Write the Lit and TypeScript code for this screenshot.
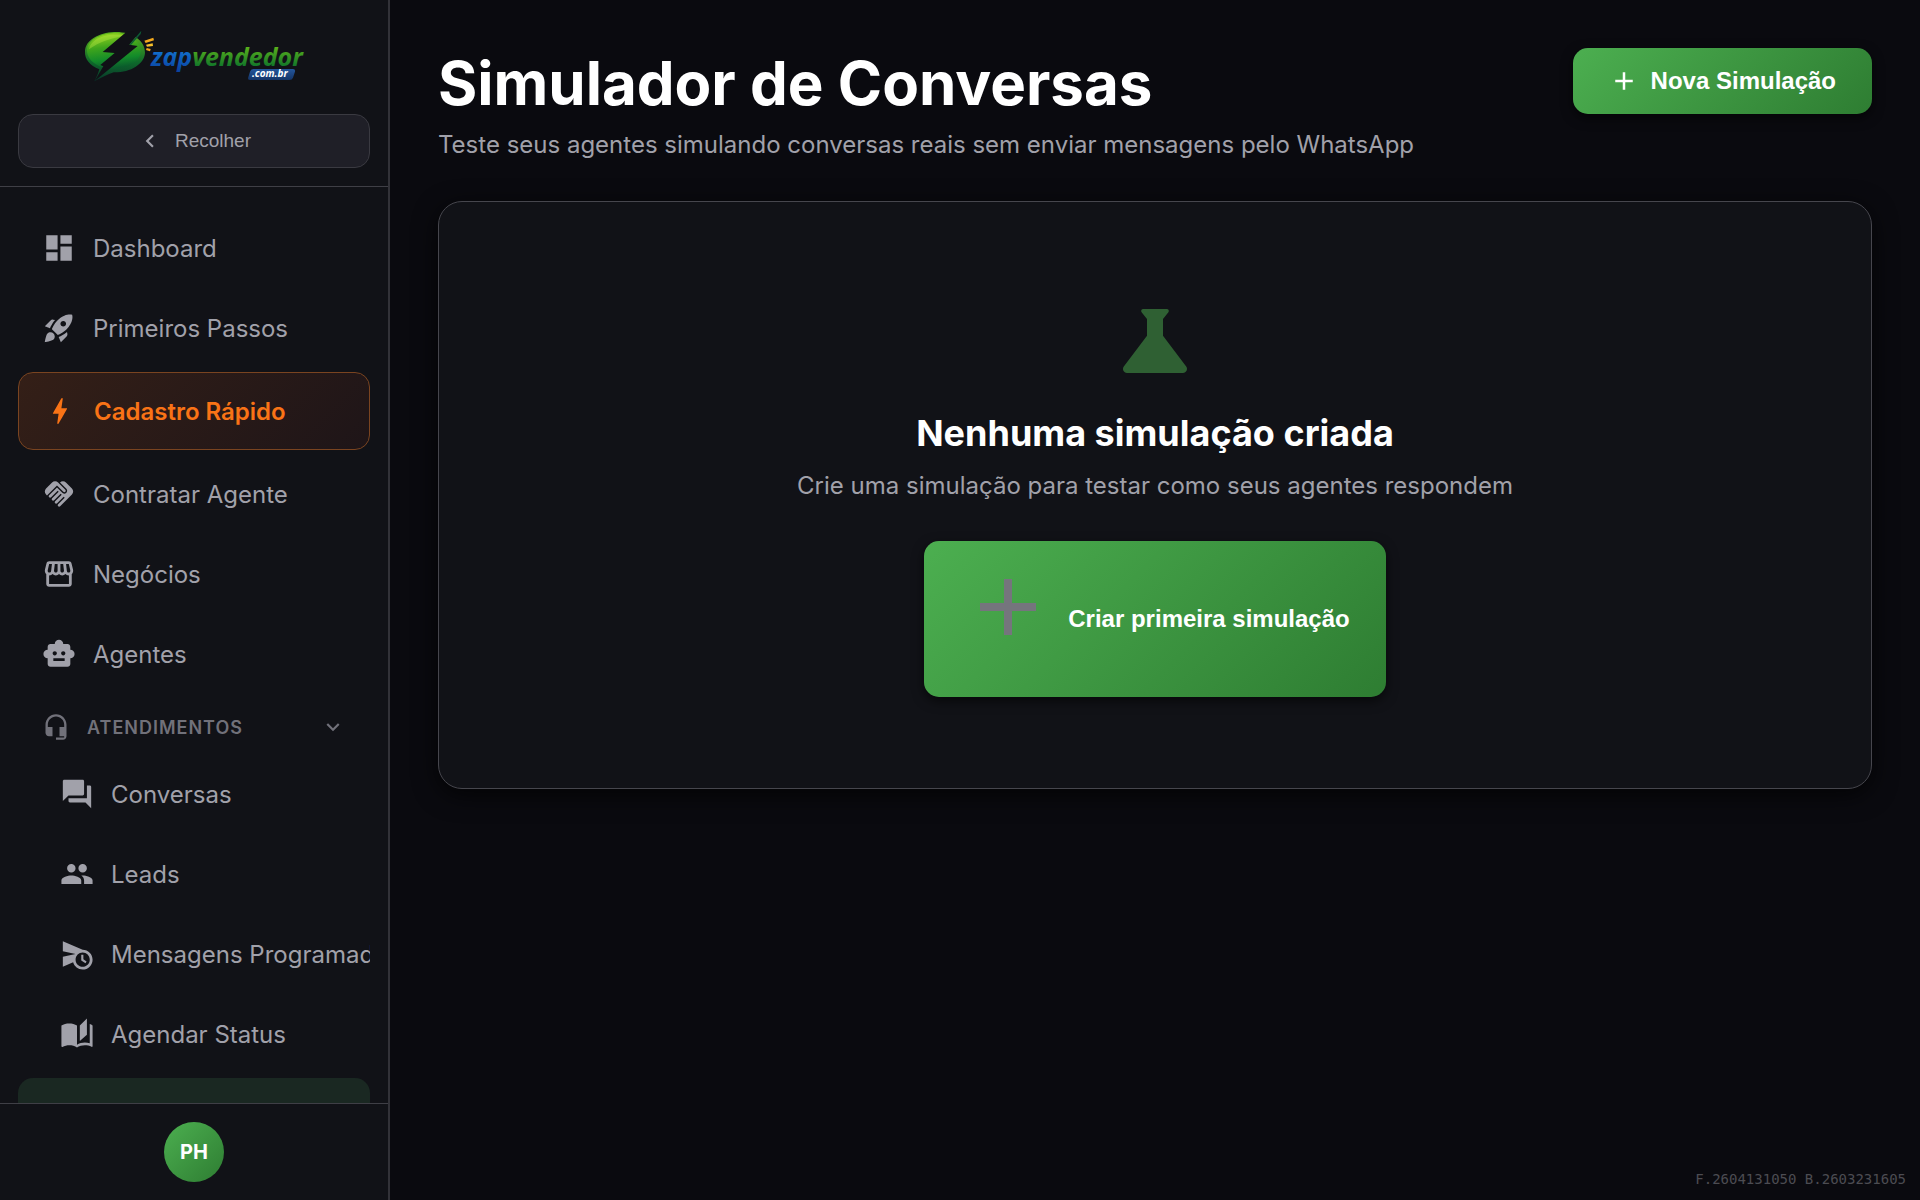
import { LitElement, html, svg, css } from "lit";
import { customElement, property, state } from "lit/decorators.js";
import { classMap } from "lit/directives/class-map.js";

const ICONS: Record<string, string> = {
  dashboard: "M3 13h8V3H3v10zm0 8h8v-6H3v6zm10 0h8V11h-8v10zm0-18v6h8V3h-8z",
  rocket:
    "M9.19,6.35c-2.04,2.29-3.44,5.58-3.57,5.89L2,10.69l4.05-4.05c0.47-0.47,1.15-0.68,1.81-0.55L9.19,6.35L9.19,6.35z M11.17,17c0,0,3.74-1.55,5.89-3.7c5.4-5.4,4.5-9.62,4.21-10.57c-0.95-0.3-5.17-1.19-10.57,4.21C8.55,9.09,7,12.83,7,12.83L11.17,17z M17.65,14.81c-2.29,2.04-5.58,3.44-5.89,3.57L13.31,22l4.05-4.05c0.47-0.47,0.68-1.15,0.55-1.81L17.65,14.81L17.65,14.81z M9,18c0,0.83-0.34,1.58-0.88,2.12C6.94,21.3,2,22,2,22s0.7-4.94,1.88-6.12C4.42,15.34,5.17,15,6,15C7.66,15,9,16.34,9,18z M13,9c0-1.1,0.9-2,2-2s2,0.9,2,2s-0.9,2-2,2S13,10.1,13,9z",
  bolt: "M11 21h-1l1-7H7.5c-.58 0-.57-.32-.38-.66.19-.34.05-.08.07-.12C8.48 10.94 10.42 7.54 13 3h1l-1 7h3.5c.49 0 .56.33.47.51l-.07.15C12.96 17.55 11 21 11 21z",
  handshake:
    "M16.48,10.41c-0.39,0.39-1.04,0.39-1.43,0l-4.47-4.46l-7.05,7.04l-0.66-0.63c-1.17-1.17-1.17-3.07,0-4.24l4.24-4.24c1.17-1.17,3.07-1.17,4.24,0L16.48,9C16.87,9.39,16.87,10.02,16.48,10.41z M17.18,8.29c0.78,0.78,0.78,2.05,0,2.83c-1.27,1.27-2.61,0.22-2.83,0l-3.76-3.76l-5.57,5.57c-0.39,0.39-0.39,1.02,0,1.41c0.39,0.39,1.02,0.39,1.42,0l4.62-4.62l0.71,0.71l-4.62,4.62c-0.39,0.39-0.39,1.02,0,1.41c0.39,0.39,1.02,0.39,1.42,0l4.62-4.62l0.71,0.71l-4.62,4.62c-0.39,0.39-0.39,1.02,0,1.41c0.39,0.39,1.02,0.39,1.41,0l4.62-4.62l0.71,0.71l-4.62,4.62c-0.39,0.39-0.39,1.02,0,1.41c0.39,0.39,1.02,0.39,1.41,0l8.32-8.34c1.17-1.17,1.17-3.07,0-4.24l-4.24-4.24c-1.15-1.15-3.01-1.17-4.18-0.06L17.18,8.29z",
  store:
    "M21.9 8.89l-1.05-4.37c-.22-.9-1-1.52-1.91-1.52H5.05c-.9 0-1.69.63-1.9 1.52L2.1 8.89c-.24 1.02-.02 2.06.62 2.88.08.11.19.19.28.29V19c0 1.1.9 2 2 2h14c1.1 0 2-.9 2-2v-6.94c.09-.09.2-.18.28-.28.64-.82.87-1.87.62-2.89zm-2.99-3.9l1.05 4.37c.1.42.01.84-.25 1.17-.14.18-.44.47-.94.47-.61 0-1.14-.49-1.21-1.14L16.98 5l1.93-.01zM13 5h1.96l.54 4.52c.05.39-.07.78-.33 1.07-.22.26-.54.41-.95.41-.67 0-1.22-.59-1.22-1.31V5zM8.49 9.52L9.04 5H11v4.69c0 .72-.55 1.31-1.29 1.31-.34 0-.65-.15-.89-.41-.25-.29-.37-.68-.33-1.07zm-4.45-.16L5.05 5h1.97l-.58 4.86c-.08.65-.6 1.14-1.21 1.14-.49 0-.8-.29-.93-.47-.27-.32-.36-.75-.26-1.17zM5 19v-6.03c.08.01.15.03.23.03.87 0 1.66-.36 2.24-.95.6.6 1.4.95 2.31.95.87 0 1.65-.36 2.23-.93.59.57 1.39.93 2.29.93.84 0 1.64-.35 2.24-.95.58.59 1.37.95 2.24.95.08 0 .15-.02.23-.03V19H5z",
  robot:
    "M20 9V7c0-1.1-.9-2-2-2h-3c0-1.66-1.34-3-3-3S9 3.34 9 5H6c-1.1 0-2 .9-2 2v2c-1.66 0-3 1.34-3 3s1.34 3 3 3v4c0 1.1.9 2 2 2h12c1.1 0 2-.9 2-2v-4c1.66 0 3-1.34 3-3s-1.34-3-3-3zM7.5 11.5c0-.83.67-1.5 1.5-1.5s1.5.67 1.5 1.5S9.83 13 9 13s-1.5-.67-1.5-1.5zM16 17H8v-2h8v2zm-1-4c-.83 0-1.5-.67-1.5-1.5S14.17 10 15 10s1.5.67 1.5 1.5S15.83 13 15 13z",
  headset:
    "M12 1c-4.97 0-9 4.03-9 9v7c0 1.66 1.34 3 3 3h3v-8H5v-2c0-3.87 3.13-7 7-7s7 3.13 7 7v2h-4v8h4v1h-7v2h6c1.66 0 3-1.34 3-3V10c0-4.97-4.03-9-9-9z",
  chat: "M21 6h-2v9H6v2c0 .55.45 1 1 1h11l4 4V7c0-.55-.45-1-1-1zm-4 6V3c0-.55-.45-1-1-1H3c-.55 0-1 .45-1 1v14l4-4h10c.55 0 1-.45 1-1z",
  people:
    "M16 11c1.66 0 2.99-1.34 2.99-3S17.66 5 16 5c-1.66 0-3 1.34-3 3s1.34 3 3 3zm-8 0c1.66 0 2.99-1.34 2.99-3S9.66 5 8 5C6.34 5 5 6.34 5 8s1.34 3 3 3zm0 2c-2.33 0-7 1.17-7 3.5V19h14v-2.5c0-2.33-4.67-3.5-7-3.5zm8 0c-.29 0-.62.02-.97.05 1.16.84 1.97 1.97 1.97 3.45V19h6v-2.5c0-2.33-4.67-3.5-7-3.5z",
  scheduleSend:
    "M16.5,12.5H15v4l3,2l0.75-1.23l-2.25-1.52V12.5z M16,9L2,3v7l9,2l-9,2v7l7.27-3.11C10.09,20.83,12.79,23,16,23c3.86,0,7-3.14,7-7S19.86,9,16,9z M16,21c-2.75,0-5-2.25-5-5s2.25-5,5-5s5,2.25,5,5S18.75,21,16,21z",
  stories:
    "M19 1l-5 5v11l5-4.5V1zM1 6v14.65c0 .25.25.5.5.5.1 0 .15-.05.25-.05C3.1 20.45 5.05 20 6.5 20c1.95 0 4.05.4 5.5 1.5V6c-1.45-1.1-3.55-1.5-5.5-1.5S2.45 4.9 1 6zm22 13.5V6c-.6-.45-1.25-.75-2-1v13.5c-1.1-.35-2.3-.5-3.5-.5-1.7 0-4.15.65-5.5 1.5v2c1.35-.85 3.8-1.5 5.5-1.5 1.65 0 3.35.3 4.75 1.05.1.05.15.05.25.05.25 0 .5-.25.5-.5v-1.1z",
  science:
    "M19.8,18.4L14,10.67V6.5l1.35-1.69C15.61,4.48,15.38,4,14.96,4H9.04C8.62,4,8.39,4.48,8.65,4.81L10,6.5v4.17L4.2,18.4C3.71,19.06,4.18,20,5,20h14C19.82,20,20.29,19.06,19.8,18.4z",
  add: "M19 13h-6v6h-2v-6H5v-2h6V5h2v6h6v2z",
  chevronLeft: "M15.41 7.41L14 6l-6 6 6 6 1.41-1.41L10.83 12z",
  chevronDown: "M16.59 8.59L12 13.17 7.41 8.59 6 10l6 6 6-6z",
};

@customElement("zv-icon")
class ZvIcon extends LitElement {
  @property() name = "";

  static styles = css`
    :host {
      display: block;
      flex: none;
    }
    .glyph {
      display: block;
      width: 100%;
      height: 100%;
      fill: currentColor;
    }
  `;

  render() {
    return html`<svg class="glyph" viewBox="0 0 24 24" aria-hidden="true">
      ${svg`<path d=${ICONS[this.name] ?? ""}></path>`}
    </svg>`;
  }
}

@customElement("zv-logo")
class ZvLogo extends LitElement {
  static styles = css`
    :host {
      display: block;
    }
    .logo {
      display: block;
      width: 250px;
      height: 70px;
    }
    .word {
      font: italic 700 25px "Open Sans", "Noto Sans", sans-serif;
    }
    .domain {
      font: italic 700 10px "Open Sans", "Noto Sans", sans-serif;
      fill: #ffffff;
    }
  `;

  render() {
    return html`<svg class="logo" viewBox="0 0 250 70" role="img" aria-label="zapvendedor.com.br">
      <defs>
        <linearGradient id="bubble" x1="0.2" y1="0" x2="0.4" y2="1">
          <stop offset="0" stop-color="#9bd81f"></stop>
          <stop offset="0.4" stop-color="#3fa51c"></stop>
          <stop offset="0.75" stop-color="#128a2a"></stop>
          <stop offset="1" stop-color="#0a5a2c"></stop>
        </linearGradient>
        <linearGradient id="rim" x1="0" y1="0" x2="0" y2="1">
          <stop offset="0" stop-color="#5fb51c"></stop>
          <stop offset="0.6" stop-color="#0f6a2b"></stop>
          <stop offset="1" stop-color="#08352a"></stop>
        </linearGradient>
        <linearGradient id="blue" x1="0" y1="0" x2="0" y2="1">
          <stop offset="0.3" stop-color="#1273cf"></stop>
          <stop offset="1" stop-color="#0a3f9c"></stop>
        </linearGradient>
        <linearGradient id="green" x1="0" y1="0" x2="0" y2="1">
          <stop offset="0.2" stop-color="#5fb41a"></stop>
          <stop offset="0.8" stop-color="#12772a"></stop>
        </linearGradient>
        <linearGradient id="tag" x1="0" y1="0" x2="0" y2="1">
          <stop offset="0" stop-color="#24569c"></stop>
          <stop offset="1" stop-color="#143467"></stop>
        </linearGradient>
      </defs>
      <g transform="scale(0.3333)">
        <path
          fill="url(#rim)"
          d="M136 36C186 34 229 60 228 98C227 132 184 158 134 157C112 164 96 174 76 184C84 170 88 158 91 148C62 137 47 118 48 94C49 60 90 38 136 36Z"
        ></path>
        <path
          fill="url(#bubble)"
          d="M134 40C178 38 214 62 215 94C216 124 178 146 134 147C92 146 55 124 54 92C54 62 92 42 134 40Z"
        ></path>
        <path fill="#c5ee4a" opacity="0.35" d="M60 88C64 60 100 44 136 44C152 44 160 45 168 47C130 54 90 64 60 88Z"></path>
        <path fill="#101116" d="M172 36L218 30L181 74L206 78L77 183L103 139L94 135L137 99L101 96Z"></path>
        <path fill="#0d5a35" d="M217 32L181 74L186 75L215 42Z"></path>
        <path fill="#f3a81d" d="M226 62L253 53L255 61L230 69Z"></path>
        <path fill="#f7c02c" d="M231 74L251 70L252 78L234 80Z"></path>
        <path fill="#f3a81d" d="M233 84L245 87L243 94L231 90Z"></path>
        <path fill="url(#tag)" d="M553 147H672Q680 147 678 155L672 173Q670 180 661 180H544Q535 180 538 172L543 155Q545 147 553 147Z"></path>
      </g>
      <text class="word" x="82" y="46"><tspan fill="url(#blue)">zap</tspan><tspan fill="url(#green)">vendedor</tspan></text>
      <text class="domain" x="183" y="57">.com.br</text>
    </svg>`;
  }
}

interface NavEntry {
  icon: string;
  label: string;
  featured?: boolean;
}

const MAIN_LINKS: NavEntry[] = [
  { icon: "dashboard", label: "Dashboard" },
  { icon: "rocket", label: "Primeiros Passos" },
  { icon: "bolt", label: "Cadastro Rápido", featured: true },
  { icon: "handshake", label: "Contratar Agente" },
  { icon: "store", label: "Negócios" },
  { icon: "robot", label: "Agentes" },
];

const SERVICE_LINKS: NavEntry[] = [
  { icon: "chat", label: "Conversas" },
  { icon: "people", label: "Leads" },
  { icon: "scheduleSend", label: "Mensagens Programadas" },
  { icon: "stories", label: "Agendar Status" },
];

@customElement("zv-sidebar")
class ZvSidebar extends LitElement {
  @state() private servicesOpen = true;

  static styles = css`
    :host {
      display: flex;
      flex-direction: column;
      box-sizing: border-box;
      min-height: 0;
      background: #111217;
      border-right: 2px solid #323238;
      color: #a1a1aa;
    }
    .top {
      display: flex;
      flex-direction: column;
      align-items: center;
      gap: 24px;
      padding: 20px 18px 18px;
      border-bottom: 1px solid #3f3f46;
    }
    .collapse {
      display: flex;
      align-items: center;
      justify-content: center;
      gap: 12px;
      box-sizing: border-box;
      width: 100%;
      height: 54px;
      border: 1px solid #3a3a41;
      border-radius: 15px;
      background: #1f1f27;
      color: #a1a1aa;
      font: 19px "Liberation Sans", Arial, sans-serif;
      cursor: pointer;
    }
    .small {
      width: 26px;
      height: 26px;
    }
    .nav {
      display: flex;
      flex: 1;
      flex-direction: column;
      gap: 4px;
      min-height: 0;
      padding: 23px 18px 0;
      overflow: hidden;
    }
    .link {
      display: flex;
      flex: none;
      align-items: center;
      gap: 17px;
      box-sizing: border-box;
      height: 76px;
      padding-left: 24px;
      border-radius: 15px;
      overflow: hidden;
      color: inherit;
      font-size: 24px;
      text-decoration: none;
      white-space: nowrap;
    }
    .link.sub {
      padding-left: 42px;
    }
    .link.featured {
      height: 78px;
      margin: 2px 0;
      border: 1px solid #7a4420;
      background: linear-gradient(135deg, #341f17, #1e1518);
      color: #f97316;
      font-weight: 600;
    }
    .link-icon {
      width: 34px;
      height: 34px;
    }
    .group {
      display: flex;
      flex: none;
      align-items: center;
      gap: 17px;
      height: 50px;
      margin-top: 6px;
      padding: 0 24px;
      border: 0;
      background: none;
      color: #71717a;
      font: 600 18px Inter, sans-serif;
      letter-spacing: 1px;
      text-transform: uppercase;
      cursor: pointer;
    }
    .group-icon {
      width: 28px;
      height: 28px;
    }
    .group-label {
      flex: 1;
      text-align: left;
    }
    .current {
      flex: none;
      height: 76px;
      margin-top: 2px;
      border-radius: 15px;
      background: #1a2822;
    }
    .account {
      display: flex;
      justify-content: center;
      padding: 18px;
      border-top: 1px solid #3f3f46;
    }
    .avatar {
      width: 60px;
      height: 60px;
      padding: 0;
      border: 0;
      border-radius: 50%;
      background: linear-gradient(135deg, #4caf50, #2e7d32);
      color: #ffffff;
      font: 700 20px Inter, sans-serif;
      cursor: pointer;
    }
  `;

  private link(entry: NavEntry, sub: boolean) {
    return html`<a class=${classMap({ link: true, sub, featured: !!entry.featured })} href="#">
      <zv-icon class="link-icon" name=${entry.icon}></zv-icon><span>${entry.label}</span>
    </a>`;
  }

  render() {
    return html`
      <div class="top">
        <zv-logo></zv-logo>
        <button class="collapse" type="button">
          <zv-icon class="small" name="chevronLeft"></zv-icon><span>Recolher</span>
        </button>
      </div>
      <nav class="nav">
        ${MAIN_LINKS.map((entry) => this.link(entry, false))}
        <button
          class="group"
          type="button"
          aria-expanded=${this.servicesOpen}
          @click=${() => (this.servicesOpen = !this.servicesOpen)}
        >
          <zv-icon class="group-icon" name="headset"></zv-icon>
          <span class="group-label">Atendimentos</span>
          <zv-icon class="small" name="chevronDown"></zv-icon>
        </button>
        ${this.servicesOpen ? SERVICE_LINKS.map((entry) => this.link(entry, true)) : null}
        <div class="current"></div>
      </nav>
      <div class="account">
        <button class="avatar" type="button">PH</button>
      </div>
    `;
  }
}

@customElement("app-root")
class AppRoot extends LitElement {
  static styles = css`
    :host {
      display: grid;
      grid-template-columns: 390px minmax(0, 1fr);
      grid-template-rows: minmax(0, 1fr);
      position: relative;
      height: 100vh;
      background: #0a0a0f;
      color: #ffffff;
      font-family: Inter, "Noto Sans", sans-serif;
    }
    .page {
      padding: 48px;
      overflow: auto;
    }
    .head {
      display: flex;
      align-items: flex-start;
      justify-content: space-between;
      gap: 24px;
      margin-bottom: 38px;
    }
    .title {
      margin: 0;
      font-size: 60px;
      font-weight: 700;
      line-height: 70px;
    }
    .lead {
      margin: 9px 0 0;
      color: #a1a1aa;
      font-size: 24px;
      line-height: 36px;
    }
    .primary {
      display: flex;
      align-items: center;
      gap: 12px;
      flex: none;
      padding: 18px 36px;
      border: 0;
      border-radius: 15px;
      background: linear-gradient(135deg, #4caf50, #2e7d32);
      box-shadow: 0 4px 12px rgba(0, 0, 0, 0.6);
      color: #ffffff;
      font: 700 24px "Liberation Sans", Arial, sans-serif;
      cursor: pointer;
    }
    .add {
      width: 30px;
      height: 30px;
    }
    .empty {
      display: flex;
      flex-direction: column;
      align-items: center;
      padding: 91px 48px;
      border: 1px solid #46464d;
      border-radius: 24px;
      background: #111217;
      box-shadow: 0 6px 24px rgba(0, 0, 0, 0.7);
      text-align: center;
    }
    .hero {
      width: 96px;
      height: 96px;
      margin-bottom: 24px;
      color: #2f6033;
    }
    .hero.muted {
      color: #75757d;
    }
    .subtitle {
      margin: 0;
      font-size: 36px;
      font-weight: 700;
      line-height: 40px;
    }
    .hint {
      margin: 15px 0 37px;
      color: #a1a1aa;
      font-size: 24px;
      line-height: 36px;
    }
    .version {
      position: absolute;
      right: 14px;
      bottom: 12px;
      color: #4c4c52;
      font: 14px/18px "DejaVu Sans Mono", monospace;
    }
  `;

  render() {
    return html`
      <zv-sidebar></zv-sidebar>
      <main class="page">
        <header class="head">
          <div>
            <h1 class="title">Simulador de Conversas</h1>
            <p class="lead">Teste seus agentes simulando conversas reais sem enviar mensagens pelo WhatsApp</p>
          </div>
          <button class="primary" type="button">
            <zv-icon class="add" name="add"></zv-icon><span>Nova Simulação</span>
          </button>
        </header>
        <section class="empty">
          <zv-icon class="hero" name="science"></zv-icon>
          <h2 class="subtitle">Nenhuma simulação criada</h2>
          <p class="hint">Crie uma simulação para testar como seus agentes respondem</p>
          <button class="primary" type="button">
            <zv-icon class="hero muted" name="add"></zv-icon><span>Criar primeira simulação</span>
          </button>
        </section>
      </main>
      <div class="version">F.2604131050 B.2603231605</div>
    `;
  }
}
